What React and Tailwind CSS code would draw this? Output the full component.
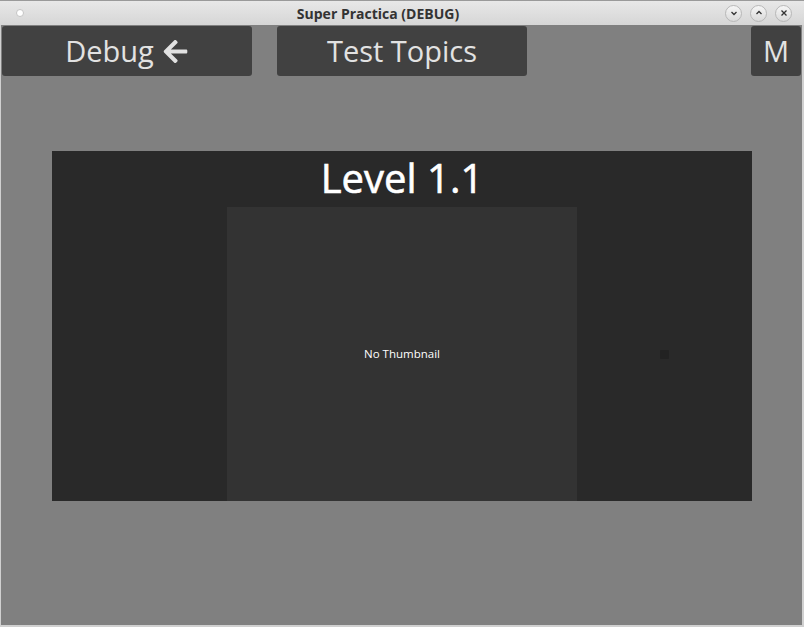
import { FaArrowLeft } from 'react-icons/fa';

const font = { fontFamily: '"Open Sans", "Noto Sans", sans-serif' };

const WinButton = ({ children }) => (
  <div className="w-[17px] h-[17px] rounded-full border border-[#b8b8b8] bg-gradient-to-b from-[#f6f6f6] to-[#dadada] flex items-center justify-center text-[#333]">
    {children}
  </div>
);

const TopButton = ({ className, children }) => (
  <div className={`h-[50px] bg-[#414141] rounded-[3px] flex items-center justify-center text-[#e2e2e2] text-[29px] ${className}`}>
    {children}
  </div>
);

export default function App() {
  return (
    <div className="w-[804px] h-[627px] flex flex-col bg-[#d0d0d0] overflow-hidden" style={font}>
      {/* title bar */}
      <div className="h-[25px] shrink-0 relative flex items-center bg-gradient-to-b from-[#e8e8e8] to-[#d6d6d6] border-t border-[#9a9a9a]">
        <div className="ml-[16px] w-[8px] h-[8px] rounded-full bg-white border border-[#c4c4c4]" />
        <div className="flex-1 text-center text-[14px] font-bold text-[#333] pl-[7px]">Super Practica (DEBUG)</div>
        <div className="flex items-center gap-[8px] mr-[12px]">
          <WinButton>
            <svg width="8" height="8" viewBox="0 0 8 8"><path d="M1.5 3l2.5 2.5L6.5 3" fill="none" stroke="currentColor" strokeWidth="1.3" /></svg>
          </WinButton>
          <WinButton>
            <svg width="8" height="8" viewBox="0 0 8 8"><path d="M1.5 5l2.5-2.5L6.5 5" fill="none" stroke="currentColor" strokeWidth="1.3" /></svg>
          </WinButton>
          <WinButton>
            <svg width="8" height="8" viewBox="0 0 8 8"><path d="M1.5 1.5l5 5M6.5 1.5l-5 5" fill="none" stroke="currentColor" strokeWidth="1.3" /></svg>
          </WinButton>
        </div>
      </div>

      {/* content */}
      <div className="flex-1 mx-[1px] mr-[2px] mb-[2px] bg-[#808080] pt-[1px] px-[1px] flex flex-col">
        <div className="flex">
          <TopButton className="w-[250px]">
            <span>Debug</span>
            <FaArrowLeft className="ml-[8px] text-[27px]" />
          </TopButton>
          <TopButton className="w-[250px] ml-[25px]">Test Topics</TopButton>
          <TopButton className="w-[50px] ml-auto">M</TopButton>
        </div>

        <div className="mt-[75px] ml-[50px] w-[700px] h-[350px] bg-[#292929] flex flex-col">
          <div className="h-[56px] flex items-center justify-center text-white text-[40px] leading-none pb-[2px] [-webkit-text-stroke:0.6px_white]">
            Level 1.1
          </div>
          <div className="flex-1 flex">
            <div className="w-[175px]" />
            <div className="w-[350px] bg-[#333333] flex items-center justify-center text-white text-[11.5px]">
              No Thumbnail
            </div>
            <div className="w-[175px] flex items-center justify-center">
              <div className="w-[9px] h-[9px] rounded-[1px] bg-[#222222]" />
            </div>
          </div>
        </div>
      </div>
    </div>
  );
}
